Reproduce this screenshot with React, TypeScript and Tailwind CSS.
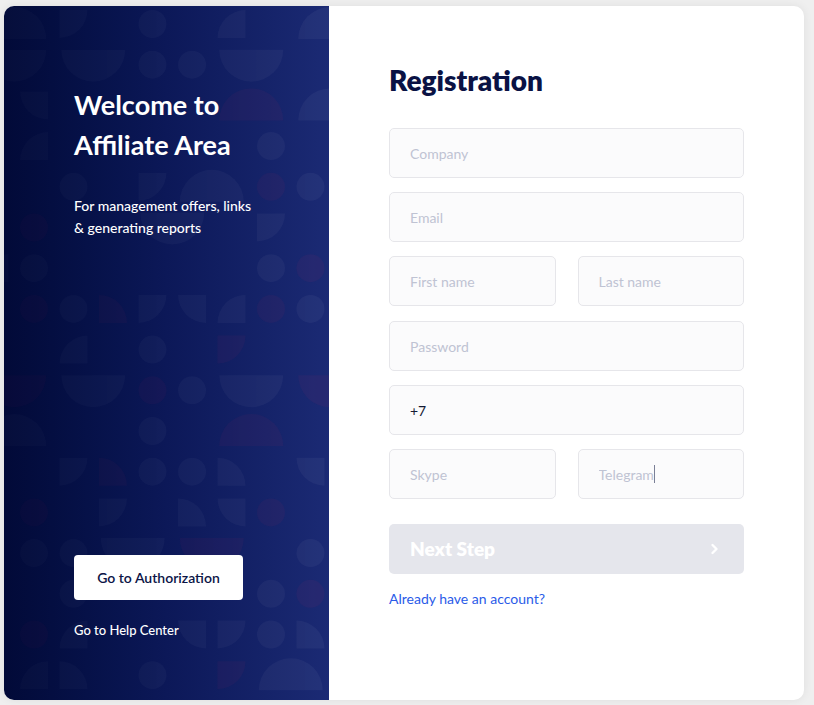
import React from 'react';

// pattern rows, columns -1..7
// o circle, p pink circle, a/b/c/d quarters (corner bl, br, tl, tr), A-D pink quarters
// U/V wide half disc flat top (white/pink), N/M wide half disc flat bottom, '-' taken, '.' empty
const rows = [
  'N-c.o.b.N',
  'U-U-ooU-.',
  '.d....M-N',
  '.b.....o.',
  '..o.cN-po',
  '.p..U-.c.',
  'bo.....op',
  '.poAcdbpo',
  '..b.o.C..',
  'V-U-poU-V',
  'N-..o.M-.',
  '..cAooa.d',
  '.p.c.adp.',
  '.ooU-V-.o',
  '..o....op',
  '.pb..dcoa',
  '.ba.o.CN-',
];

const R = 14;

function Shape({ ch, cx, cy }: { ch: string; cx: number; cy: number }) {
  const pink = /[pABCDVM]/.test(ch);
  const fill = pink ? '#c02a5c' : '#ffffff';
  const op = pink ? 0.075 : 0.045;
  const x0 = cx - R;
  const x1 = cx + R;
  const y0 = cy - R;
  const y1 = cy + R;
  const k = ch.toLowerCase();
  let d = '';
  if (k === 'o' || k === 'p') {
    return <circle cx={cx} cy={cy} r={R} fill={fill} fillOpacity={op} />;
  }
  if (k === 'a') d = `M${x0},${y1} L${x0},${y0} A28,28 0 0 1 ${x1},${y1} Z`;
  if (k === 'b') d = `M${x1},${y1} L${x0},${y1} A28,28 0 0 1 ${x1},${y0} Z`;
  if (k === 'c') d = `M${x0},${y0} L${x1},${y0} A28,28 0 0 1 ${x0},${y1} Z`;
  if (k === 'd') d = `M${x1},${y0} L${x1},${y1} A28,28 0 0 1 ${x0},${y0} Z`;
  const mx = cx + 19.75;
  if (k === 'u' || k === 'v') d = `M${mx - 32},${cy - 15} A32,32 0 0 0 ${mx + 32},${cy - 15} Z`;
  if (k === 'n' || k === 'm') d = `M${mx - 32},${cy + 15} A32,32 0 0 1 ${mx + 32},${cy + 15} Z`;
  if (!d) return null;
  return <path d={d} fill={fill} fillOpacity={op} />;
}

function Pattern() {
  return (
    <svg className="absolute inset-0 h-full w-full" viewBox="0 0 325 694" preserveAspectRatio="xMinYMin slice">
      <defs>
        <linearGradient id="fade" x1="0" x2="1" y1="0" y2="0">
          <stop offset="0" stopColor="#fff" stopOpacity="0.4" />
          <stop offset="1" stopColor="#fff" stopOpacity="1" />
        </linearGradient>
        <mask id="m">
          <rect width="325" height="694" fill="url(#fade)" />
        </mask>
      </defs>
      <g mask="url(#m)">
        {rows.map((row, r) =>
          row.split('').map((ch, i) => (
            <Shape key={`${r}-${i}`} ch={ch} cx={-9.5 + i * 39.5} cy={18 + r * 40.7} />
          ))
        )}
      </g>
    </svg>
  );
}

const field =
  'h-[50px] w-full rounded-[5px] border border-[#e6e6ea] bg-[#fbfbfc] px-[20px] text-[14px] text-[#151a33] outline-none placeholder:text-[#bfc3d3]';

export default function App() {
  return (
    <div className="min-h-screen bg-[#efefef] pt-[6px] pl-[4px]" style={{ fontFamily: 'Lato, "Open Sans", sans-serif' }}>
      <div className="flex h-[694px] w-[800px] overflow-hidden rounded-[10px] bg-white shadow-[0_0_10px_rgba(0,0,0,0.07)]">
        {/* Left promo panel */}
        <div className="relative flex w-[325px] shrink-0 flex-col bg-linear-to-r from-[#020a38] via-[#0c1858] to-[#1b2a74] pt-[79px] pl-[70px] pb-[60px] text-white">
          <Pattern />
          <div className="relative">
            <h1 className="text-[27px] leading-[40px] font-bold">
              Welcome to
              <br />
              Affiliate Area
            </h1>
            <p className="mt-[30px] text-[14px] leading-[22px] font-medium">
              For management offers, links
              <br />
              &amp; generating reports
            </p>
          </div>
          <div className="relative mt-auto">
            <button className="h-[45px] w-[169px] rounded-[4px] bg-white text-[14px] font-semibold text-[#0b1446]">
              Go to Authorization
            </button>
            <div className="mt-[20px] text-[13px] leading-[20px] font-medium">Go to Help Center</div>
          </div>
        </div>

        {/* Registration form */}
        <div className="flex-1 px-[60px] pt-[56px]">
          <h2 className="text-[28px] leading-[36px] font-extrabold text-[#0a1244]">Registration</h2>
          <div className="mt-[30px] flex flex-col gap-[14px]">
            <input className={field} placeholder="Company" />
            <input className={field} placeholder="Email" />
            <div className="mb-[1px] grid grid-cols-2 gap-[22px]">
              <input className={field} placeholder="First name" />
              <input className={field} placeholder="Last name" />
            </div>
            <input className={field} placeholder="Password" type="password" />
            <input className={field} defaultValue="+7" />
            <div className="grid grid-cols-2 gap-[22px]">
              <input className={field} placeholder="Skype" />
              <div className="relative">
                <input className={field} placeholder="Telegram" />
                <div className="pointer-events-none absolute inset-y-0 left-[21px] flex items-center text-[14px]">
                  <span className="invisible">Telegram</span>
                  <span className="h-[18px] w-px bg-[#7a7f96]" />
                </div>
              </div>
            </div>
          </div>
          <button className="mt-[25px] flex h-[50px] w-full items-center justify-between rounded-[5px] bg-[#e5e6ec] pr-[25px] pl-[21px] text-[19px] font-extrabold text-white">
            Next Step
            <svg width="9" height="12" viewBox="0 0 9 12" fill="none">
              <path d="M2.5 2l4 4-4 4" stroke="white" strokeWidth="2.4" strokeLinecap="round" strokeLinejoin="round" />
            </svg>
          </button>
          <a href="#" className="mt-[15px] block text-[14px] leading-[20px] text-[#2a5be8]">
            Already have an account?
          </a>
        </div>
      </div>
    </div>
  );
}
